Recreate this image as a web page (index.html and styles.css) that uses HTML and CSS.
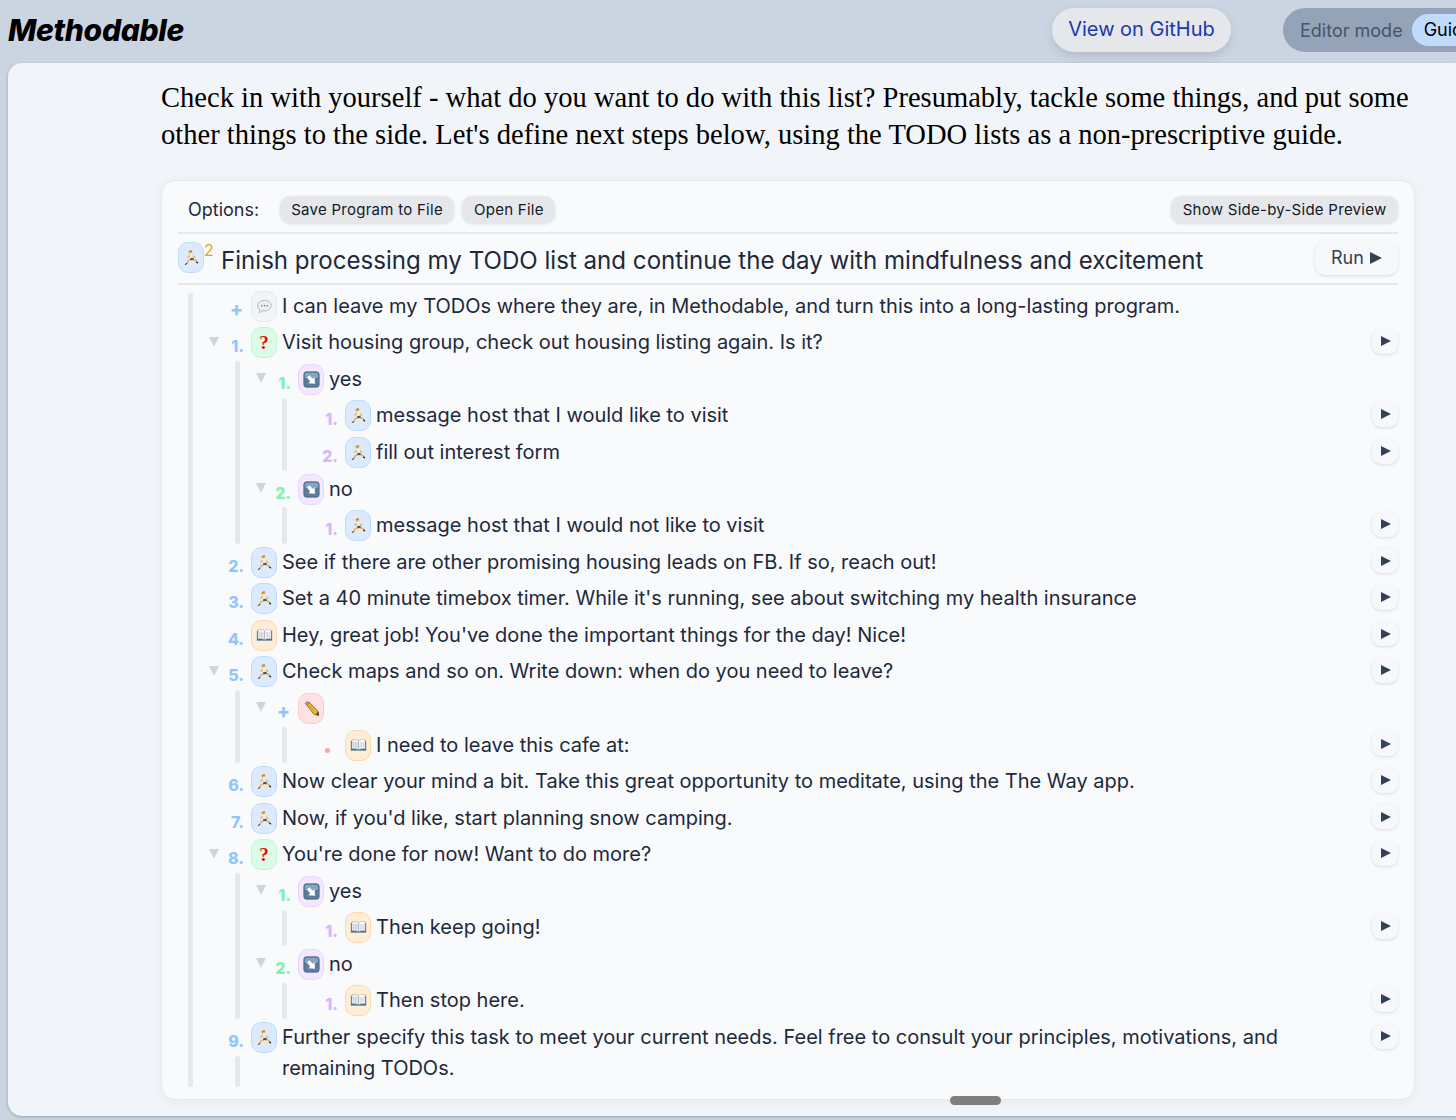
FILE: index.html
```html
<!DOCTYPE html>
<html lang="en">
<head>
<meta charset="utf-8">
<title>Methodable</title>
<link rel="stylesheet" href="styles.css">
</head>
<body>
<svg class="defs" width="0" height="0" aria-hidden="true">
  <symbol id="run" viewBox="0 0 16 16">
    <circle cx="7" cy="3" r="1.700" fill="#f4b740"/>
    <path d="M5.200 2.200l2.800-1.200.7 1.300-2.900 1z" fill="#c9812a"/>
    <path d="M7.500 5.400L4.700 7.600M7.800 5.400l3.400 2.300" stroke="#f2ab3a" stroke-width="1.200" fill="none" stroke-linecap="round"/>
    <path d="M7.700 5.200l.7 3.800" stroke="#eef0f3" stroke-width="2.600" stroke-linecap="round"/>
    <path d="M7.700 10L5 11l-1.400 2.200M9 10l3 .8 1.200 1.400" stroke="#f2ab3a" stroke-width="1.300" fill="none" stroke-linecap="round" stroke-linejoin="round"/>
    <path d="M6.800 8.500l3-.3.500 2-3.400.3z" fill="#4d5560"/>
    <path d="M1.600 14.400l2-1.300.6.800-2.200 1.200zM12.600 11.600l1.800 1-.4 1.200-1.900-1.100z" fill="#2f343b"/>
  </symbol>
  <symbol id="note" viewBox="0 0 16 16">
    <path d="M8 2.200c3.700 0 6.400 2.200 6.400 5s-2.700 5-6.400 5c-.7 0-1.300-.1-1.900-.2-.8.800-2 1.500-3.400 1.700.6-.7 1-1.500 1.100-2.400C2.400 10.400 1.600 8.900 1.600 7.200c0-2.800 2.700-5 6.400-5z" fill="#eceef1" stroke="#a9afb8" stroke-width=".8"/>
    <circle cx="5.400" cy="7.200" r=".7" fill="#666c75"/>
    <circle cx="8" cy="7.200" r=".7" fill="#666c75"/>
    <circle cx="10.600" cy="7.200" r=".7" fill="#666c75"/>
  </symbol>
  <symbol id="branch" viewBox="0 0 16 16">
    <rect x=".8" y=".8" width="14.400" height="14.400" rx="2.400" fill="#5d7d9e" stroke="#3f5a78" stroke-width=".7"/>
    <rect x="1.800" y="1.600" width="12.400" height="5" rx="1.500" fill="#86a3bf"/>
    <path d="M3.800 6.200L5.900 4l3.300 3.300 1.700-1.700.4 6.300-6.300-.4 1.700-1.700z" fill="#fff"/>
  </symbol>
  <symbol id="book" viewBox="0 0 16 16">
    <path d="M.8 3.600h14.400v9.200H.8z" fill="#3f6f92"/>
    <path d="M1.800 2.600c2.400-.4 4.800-.2 6.200.8v8.400c-1.400-.8-3.800-1-6.200-.7z" fill="#f3f4f6" stroke="#9aa3ad" stroke-width=".5"/>
    <path d="M14.200 2.600c-2.400-.4-4.800-.2-6.200.8v8.400c1.400-.8 3.800-1 6.200-.7z" fill="#fff" stroke="#9aa3ad" stroke-width=".5"/>
    <path d="M3.500 4.600v5.400M5 4.600v5.400M6.500 4.800v5.400M9.500 4.800v5.400M11 4.600v5.400M12.500 4.600v5.400" stroke="#aeb6bf" stroke-width=".6"/>
  </symbol>
  <symbol id="pencil" viewBox="0 0 16 16">
    <path d="M3.400 4.600L5.800 2.200l8 8.200.8 4.200-4.200-1.200z" fill="#f5c02e" stroke="#5a4a1c" stroke-width=".7"/>
    <path d="M2 3.200c.6-1 1.500-1.700 2.300-1.600l1.500 .6-2.400 2.400z" fill="#ec7f8f" stroke="#7c4a4a" stroke-width=".5"/>
    <path d="M12 13.300l2.600-2.500.4 3.900z" fill="#4a4034"/>
    <path d="M5 4.300l7.600 7.700" stroke="#d99a18" stroke-width="1"/>
  </symbol>
</svg>

<header class="topbar">
  <h1 class="logo">Methodable</h1>
  <a class="github" href="#">View on GitHub</a>
  <div class="mode">
    <span class="mode-label">Editor mode</span>
    <span class="mode-pill">Guided</span>
  </div>
</header>

<main class="page">
  <p class="prose">Check in with yourself - what do you want to do with this list? Presumably, tackle some things, and put some other things to the side. Let's define next steps below, using the TODO lists as a non-prescriptive guide.</p>

  <section class="editor">
    <div class="options">
      <span class="options-label">Options:</span>
      <button class="opt">Save Program to File</button>
      <button class="opt">Open File</button>
      <button class="opt opt-end">Show Side-by-Side Preview</button>
    </div>

    <div class="head">
      <span class="ico ico-run ico-head"><svg><use href="#run"/></svg></span>
      <sup class="count">2</sup>
      <h2 class="head-title">Finish processing my TODO list and continue the day with mindfulness and excitement</h2>
      <button class="run">Run <i class="tri"></i></button>
    </div>

    <div class="tree">
      <div class="bar bar-root"></div>
      <div class="list">
        <div class="row"><div class="lead"><b class="num blue plus">+</b></div><span class="ico ico-note"><svg><use href="#note"/></svg></span><div class="txt">I can leave my TODOs where they are, in Methodable, and turn this into a long-lasting program.</div></div>

        <div class="row"><div class="lead"><i class="tog"></i><b class="num blue">1.</b></div><span class="ico ico-q"><span class="qm">?</span></span><div class="txt">Visit housing group, check out housing listing again. Is it?</div><button class="go"><i class="tri"></i></button></div>
        <div class="kids"><div class="bar"></div><div class="list">
          <div class="row"><div class="lead"><i class="tog"></i><b class="num green">1.</b></div><span class="ico ico-br"><svg><use href="#branch"/></svg></span><div class="txt">yes</div></div>
          <div class="kids"><div class="bar"></div><div class="list">
            <div class="row"><div class="lead"><b class="num purple">1.</b></div><span class="ico ico-run"><svg><use href="#run"/></svg></span><div class="txt">message host that I would like to visit</div><button class="go"><i class="tri"></i></button></div>
            <div class="row"><div class="lead"><b class="num purple">2.</b></div><span class="ico ico-run"><svg><use href="#run"/></svg></span><div class="txt">fill out interest form</div><button class="go"><i class="tri"></i></button></div>
          </div></div>
          <div class="row"><div class="lead"><i class="tog"></i><b class="num green">2.</b></div><span class="ico ico-br"><svg><use href="#branch"/></svg></span><div class="txt">no</div></div>
          <div class="kids"><div class="bar"></div><div class="list">
            <div class="row"><div class="lead"><b class="num purple">1.</b></div><span class="ico ico-run"><svg><use href="#run"/></svg></span><div class="txt">message host that I would not like to visit</div><button class="go"><i class="tri"></i></button></div>
          </div></div>
        </div></div>

        <div class="row"><div class="lead"><b class="num blue">2.</b></div><span class="ico ico-run"><svg><use href="#run"/></svg></span><div class="txt">See if there are other promising housing leads on FB. If so, reach out!</div><button class="go"><i class="tri"></i></button></div>
        <div class="row"><div class="lead"><b class="num blue">3.</b></div><span class="ico ico-run"><svg><use href="#run"/></svg></span><div class="txt">Set a 40 minute timebox timer. While it's running, see about switching my health insurance</div><button class="go"><i class="tri"></i></button></div>
        <div class="row"><div class="lead"><b class="num blue">4.</b></div><span class="ico ico-book"><svg><use href="#book"/></svg></span><div class="txt">Hey, great job! You've done the important things for the day! Nice!</div><button class="go"><i class="tri"></i></button></div>
        <div class="row"><div class="lead"><i class="tog"></i><b class="num blue">5.</b></div><span class="ico ico-run"><svg><use href="#run"/></svg></span><div class="txt">Check maps and so on. Write down: when do you need to leave?</div><button class="go"><i class="tri"></i></button></div>
        <div class="kids"><div class="bar"></div><div class="list">
          <div class="row"><div class="lead"><i class="tog"></i><b class="num blue plus">+</b></div><span class="ico ico-pen"><svg><use href="#pencil"/></svg></span><div class="txt"></div></div>
          <div class="kids"><div class="bar"></div><div class="list">
            <div class="row"><div class="lead"><b class="num pink dot">•</b></div><span class="ico ico-book"><svg><use href="#book"/></svg></span><div class="txt">I need to leave this cafe at:</div><button class="go"><i class="tri"></i></button></div>
          </div></div>
        </div></div>
        <div class="row"><div class="lead"><b class="num blue">6.</b></div><span class="ico ico-run"><svg><use href="#run"/></svg></span><div class="txt">Now clear your mind a bit. Take this great opportunity to meditate, using the The Way app.</div><button class="go"><i class="tri"></i></button></div>
        <div class="row"><div class="lead"><b class="num blue">7.</b></div><span class="ico ico-run"><svg><use href="#run"/></svg></span><div class="txt">Now, if you'd like, start planning snow camping.</div><button class="go"><i class="tri"></i></button></div>
        <div class="row"><div class="lead"><i class="tog"></i><b class="num blue">8.</b></div><span class="ico ico-q"><span class="qm">?</span></span><div class="txt">You're done for now! Want to do more?</div><button class="go"><i class="tri"></i></button></div>
        <div class="kids"><div class="bar"></div><div class="list">
          <div class="row"><div class="lead"><i class="tog"></i><b class="num green">1.</b></div><span class="ico ico-br"><svg><use href="#branch"/></svg></span><div class="txt">yes</div></div>
          <div class="kids"><div class="bar"></div><div class="list">
            <div class="row"><div class="lead"><b class="num purple">1.</b></div><span class="ico ico-book"><svg><use href="#book"/></svg></span><div class="txt">Then keep going!</div><button class="go"><i class="tri"></i></button></div>
          </div></div>
          <div class="row"><div class="lead"><i class="tog"></i><b class="num green">2.</b></div><span class="ico ico-br"><svg><use href="#branch"/></svg></span><div class="txt">no</div></div>
          <div class="kids"><div class="bar"></div><div class="list">
            <div class="row"><div class="lead"><b class="num purple">1.</b></div><span class="ico ico-book"><svg><use href="#book"/></svg></span><div class="txt">Then stop here.</div><button class="go"><i class="tri"></i></button></div>
          </div></div>
        </div></div>
        <div class="row row-wrap"><div class="lead"><b class="num blue">9.</b></div><span class="ico ico-run"><svg><use href="#run"/></svg></span><div class="txt">Further specify this task to meet your current needs. Feel free to consult your principles, motivations, and remaining TODOs.</div><button class="go"><i class="tri"></i></button><div class="bar bar-tail"></div></div>
      </div>
    </div>
  </section>
  <div class="handle"></div>
</main>
</body>
</html>
```
FILE: styles.css
```css
* { box-sizing: border-box; }
html, body { margin: 0; height: 1120px; overflow: hidden; }
body {
  background: #cbd5e1;
  font-family: Inter, "Liberation Sans", sans-serif;
  color: #1e293b;
  width: 1456px;
}
.defs { position: absolute; }

.topbar {
  display: flex;
  align-items: center;
  height: 63px;
  padding: 8px 0 11px 8px;
  overflow: hidden;
}
.logo {
  margin: 0;
  font-size: 30px;
  font-weight: 800;
  font-style: italic;
  color: #000;
  letter-spacing: -0.3px;
  line-height: 44px;
}
.github {
  margin-left: auto;
  flex: none;
  width: 179px;
  height: 44px;
  border-radius: 22px;
  background: #e5e7eb;
  color: #1a38ae;
  font-size: 20px;
  line-height: 42px;
  text-align: center;
  text-decoration: none;
  box-shadow: 0 4px 8px rgba(71, 85, 105, .18);
}
.mode {
  flex: none;
  display: flex;
  align-items: center;
  width: 173px;
  height: 44px;
  margin-left: 52px;
  padding-left: 17px;
  border-radius: 22px 0 0 22px;
  background: #94a3b8;
  overflow: hidden;
}
.mode-label { color: #475569; font-size: 18px; white-space: nowrap; }
.mode-pill {
  margin-left: 9px;
  padding: 0 12px;
  height: 32px;
  line-height: 32px;
  border-radius: 16px 0 0 16px;
  background: #bfdbfe;
  color: #000;
  font-size: 18px;
}

.page {
  position: relative;
  height: 1053px;
  margin-left: 8px;
  padding: 16px 41px 0 153px;
  background: #f1f5f9;
  border-radius: 14px 0 0 14px;
  box-shadow: 0 1px 3px rgba(51, 65, 85, .35);
}
.prose {
  margin: 0 0 27px;
  font-family: "Liberation Serif", serif;
  font-size: 28.55px;
  line-height: 37px;
  color: #000;
  width: 1254px;
}

.editor {
  height: 920px;
  padding: 0 16px;
  background: #f8fafc;
  border: 1px solid #e2e8f0;
  border-radius: 14px;
  box-shadow: 0 2px 12px rgba(148, 163, 184, .12);
  overflow: hidden;
}
.options {
  display: flex;
  align-items: center;
  height: 53px;
  border-bottom: 2px solid #e5e7eb;
  padding: 6px 0 0 10px;
  gap: 8px;
}
.options-label { font-size: 18px; color: #1f2937; margin-right: 12.5px; }
.opt {
  height: 27px;
  padding: 0 11.5px;
  border: 0;
  border-radius: 10px;
  background: #e5e7eb;
  color: #111827;
  font: 15px Inter, "Liberation Sans", sans-serif;
  letter-spacing: .27px;
  box-shadow: 0 1px 3px rgba(100, 116, 139, .2);
}
.opt-end { margin-left: auto; }

.head {
  display: flex;
  align-items: center;
  height: 51px;
  border-bottom: 2px solid #e5e7eb;
}
.ico-head { margin-top: -3px; }
.count {
  align-self: flex-start;
  margin: 8px 9px 0 0;
  width: 8px;
  font-size: 16px;
  line-height: 16px;
  color: #f59e0b;
  vertical-align: baseline;
}
.head-title {
  flex: 1;
  margin: 0;
  padding-top: 4px;
  font-size: 24.1px;
  font-weight: 400;
  line-height: 36px;
  color: #1e293b;
  white-space: nowrap;
}
.run {
  flex: none;
  display: flex;
  align-items: center;
  gap: 6px;
  width: 83px;
  height: 34px;
  margin-top: -2px;
  padding: 0 0 0 16px;
  border: 0;
  border-radius: 10px;
  background: #f6f8fb;
  color: #334155;
  font: 18px Inter, "Liberation Sans", sans-serif;
  box-shadow: 0 1px 3px rgba(100, 116, 139, .22);
}
.tri {
  display: inline-block;
  width: 0;
  height: 0;
  border-style: solid;
  border-width: 6px 0 6px 12px;
  border-color: transparent transparent transparent #334155;
}

.ico {
  flex: none;
  display: flex;
  align-items: center;
  justify-content: center;
  width: 26px;
  height: 31px;
  border-radius: 10px;
  border: 1px solid;
}
.ico svg { width: 17px; height: 17px; display: block; }
.ico-run { background: #dbeafe; border-color: #bfdbfe; }
.ico-note { background: #f3f4f6; border-color: #e5e7eb; }
.ico-q { background: #dcfce7; border-color: #bbf7d0; }
.ico-br { background: #f3e8ff; border-color: #e9d5ff; }
.ico-book { background: #ffedd5; border-color: #fed7aa; }
.ico-pen { background: #fee2e2; border-color: #fecaca; }
.qm {
  font-family: "Liberation Serif", serif;
  font-size: 19px;
  font-weight: 700;
  color: #dc1414;
  line-height: 1;
}

.tree {
  display: flex;
  margin: 3px 0 0 10px;
}
.bar {
  flex: none;
  width: 5px;
  border-radius: 3px;
  background: #e5e7eb;
}
.bar-root { margin: 4.5px 0 0; height: 794px; }
.list {
  flex: 1;
  min-width: 0;
  display: flex;
  flex-direction: column;
}
.kids {
  display: flex;
  padding-left: 42px;
}

.row {
  display: grid;
  grid-template-columns: 58px 26px 1fr 26px;
  align-items: center;
  height: 36.57px;
}
.lead {
  position: relative;
  display: flex;
  align-items: flex-end;
  justify-content: flex-end;
  height: 31px;
  padding: 0 7px 2px 0;
}
.num {
  font-size: 16px;
  line-height: 20px;
  font-weight: 800;
}
.plus { font-size: 19px; margin-right: 1px; }
.dot { margin-right: 7px; }
.blue { color: #93c5fd; }
.green { color: #86efac; }
.purple { color: #d8b4fe; }
.pink { color: #fca5a5; }
.tog {
  position: absolute;
  left: 16px;
  top: 9.5px;
  width: 0;
  height: 0;
  border-style: solid;
  border-width: 10px 5px 0;
  border-color: #d1d5db transparent transparent;
}
.txt {
  padding-left: 5px;
  font-size: 20px;
  line-height: 31px;
  color: #1e293b;
  min-width: 0;
}
.go {
  grid-column: 4;
  width: 26px;
  height: 25px;
  margin-bottom: 3px;
  display: flex;
  align-items: center;
  justify-content: center;
  padding: 0 0 0 2px;
  border: 0;
  border-radius: 9px;
  background: #f6f8fb;
  box-shadow: 0 1px 3px rgba(100, 116, 139, .22);
}
.go .tri { border-width: 5.5px 0 5.5px 10px; }

.row-wrap {
  height: auto;
  grid-template-rows: 36.57px 31px;
}
.row-wrap .txt {
  grid-column: 3;
  grid-row: 1 / span 2;
  align-self: start;
  padding-top: 3px;
  padding-right: 60px;
}
.row-wrap .go { grid-row: 1; }
.row-wrap .ico { grid-column: 2; grid-row: 1; }
.row-wrap .lead { grid-column: 1; grid-row: 1; }
.bar-tail {
  grid-column: 1;
  grid-row: 2;
  height: 31px;
  margin-left: 42px;
}

.handle {
  position: absolute;
  left: 942px;
  top: 1033px;
  width: 51px;
  height: 9px;
  border-radius: 5px;
  background: #7f7f7f;
}
```
